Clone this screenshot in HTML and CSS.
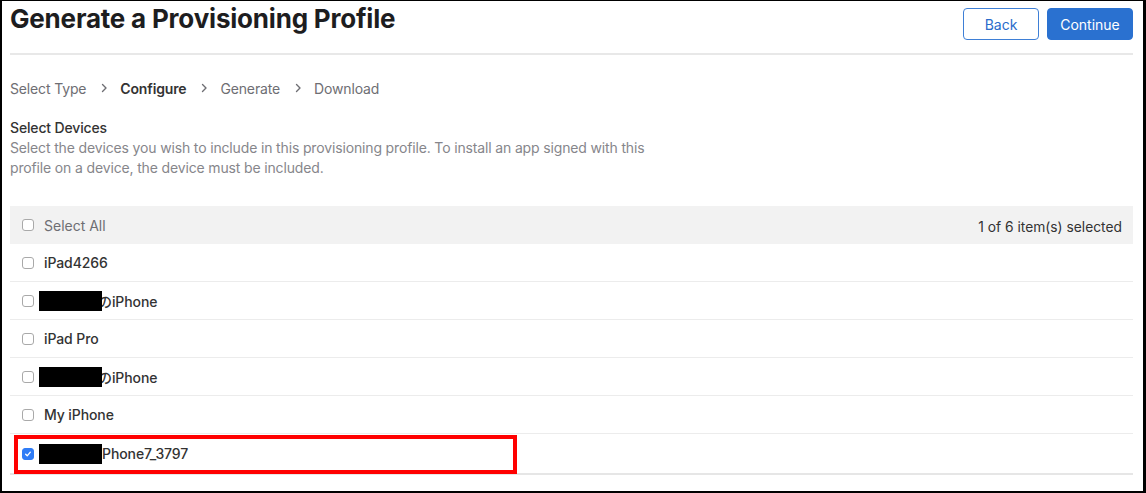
FILE: index.html
```html
<!DOCTYPE html>
<html>
<head>
<meta charset="utf-8">
<link rel="stylesheet" href="styles.css">
</head>
<body>
<div class="frame">
  <header class="header">
    <h1 class="title">Generate a Provisioning Profile</h1>
    <div class="actions">
      <button class="btn btn-back">Back</button>
      <button class="btn btn-continue">Continue</button>
    </div>
  </header>
  <nav class="crumbs">
    <span class="crumb">Select Type</span>
    <span class="chev"><svg width="7" height="10" viewBox="0 0 7 10"><path d="M1.5 1.5 L5 5 L1.5 8.5" fill="none" stroke="#6e6e73" stroke-width="1.4" stroke-linecap="round" stroke-linejoin="round"/></svg></span>
    <span class="crumb crumb-active">Configure</span>
    <span class="chev"><svg width="7" height="10" viewBox="0 0 7 10"><path d="M1.5 1.5 L5 5 L1.5 8.5" fill="none" stroke="#6e6e73" stroke-width="1.4" stroke-linecap="round" stroke-linejoin="round"/></svg></span>
    <span class="crumb">Generate</span>
    <span class="chev"><svg width="7" height="10" viewBox="0 0 7 10"><path d="M1.5 1.5 L5 5 L1.5 8.5" fill="none" stroke="#6e6e73" stroke-width="1.4" stroke-linecap="round" stroke-linejoin="round"/></svg></span>
    <span class="crumb">Download</span>
  </nav>
  <section class="intro">
    <div class="intro-title">Select Devices</div>
    <p class="intro-desc">Select the devices you wish to include in this provisioning profile. To install an app signed with this profile on a device, the device must be included.</p>
  </section>
  <div class="list">
    <div class="list-head">
      <label class="row-label"><span class="cb"></span><span class="all">Select All</span></label>
      <span class="count">1 of 6 item(s) selected</span>
    </div>
    <div class="row"><label class="row-label"><span class="cb"></span><span class="name">iPad4266</span></label></div>
    <div class="row"><label class="row-label"><span class="cb"></span><span class="name"><span class="redact"></span><span class="after-redact">のiPhone</span></span></label></div>
    <div class="row"><label class="row-label"><span class="cb"></span><span class="name">iPad Pro</span></label></div>
    <div class="row"><label class="row-label"><span class="cb"></span><span class="name"><span class="redact"></span><span class="after-redact">のiPhone</span></span></label></div>
    <div class="row"><label class="row-label"><span class="cb"></span><span class="name">My iPhone</span></label></div>
    <div class="row row-last"><label class="row-label"><span class="cb cb-on"><svg width="12" height="12" viewBox="0 0 12 12"><path d="M3.2 6.3 L5.1 8.2 L8.8 3.8" fill="none" stroke="#fff" stroke-width="1.6" stroke-linecap="round" stroke-linejoin="round"/></svg></span><span class="name"><span class="redact"></span><span class="after-redact2">Phone7_3797</span></span></label>
      <div class="highlight"></div>
    </div>
  </div>
</div>
</body>
</html>
```
FILE: styles.css
```css
* { box-sizing: border-box; }
html, body { margin: 0; padding: 0; background: #fff; }
body { font-family: Inter, "Noto Sans CJK JP", "Noto Sans", sans-serif; color: #333; }
.frame {
  width: 1146px; height: 493px;
  border-style: solid; border-color: #000;
  border-width: 1px 3px 2px 2px;
  padding: 0 10px 0 8px;
  overflow: hidden;
}
.header {
  display: flex; justify-content: space-between; align-items: flex-start;
  height: 54px;
  border-bottom: 2px solid #e8e8e8;
}
.title {
  margin: 0; font-size: 26px; line-height: 36px; font-weight: 700; color: #1d1d1f; letter-spacing: -0.2px;
}
.actions { display: flex; gap: 8px; margin-top: 7px; }
.btn {
  height: 32px; font-family: inherit; font-size: 14px; border-radius: 4px; cursor: pointer; padding: 0;
}
.btn-back { width: 76px; background: #fff; border: 1px solid #3e7fd6; color: #2a6ccb; }
.btn-continue { width: 86px; background: #2a71d0; border: 1px solid #2a71d0; color: #fff; }
.crumbs { display: flex; align-items: center; margin-top: 23px; height: 20px; font-size: 14px; color: #6e6e73; letter-spacing: -0.15px; }
.crumb-active { font-weight: 600; color: #333; }
.chev { display: flex; align-items: center; margin: 0 12px 0 15px; }
.intro { margin-top: 20px; letter-spacing: -0.15px; }
.intro-title { font-size: 14px; line-height: 20px; font-weight: 500; color: #333; }
.intro-desc { margin: 0; font-size: 14px; line-height: 20px; color: #86868b; max-width: 650px; }
.list { margin-top: 28px; }
.list-head {
  display: flex; justify-content: space-between; align-items: center;
  height: 38px; background: #f2f2f2; padding: 0 11px 0 12px;
}
.count { font-size: 13.8px; color: #333; padding-top: 3px; }
.row-label { display: flex; align-items: center; }
.cb {
  width: 12px; height: 12px; border: 1px solid #a9a9a9; border-radius: 3px; background: #fff;
  margin-right: 10px; flex: none; display: flex; align-items: center; justify-content: center;
}
.cb-on { background: #2f7cf6; border-color: #2f7cf6; }
.all { font-size: 14px; color: #6e6e73; }
.row {
  position: relative;
  display: flex; align-items: center; height: 38px;
  border-bottom: 1px solid #ececec; padding-left: 12px;
}
.row-last { height: 41px; border-bottom: 2px solid #e6e6e6; }
.name { font-size: 14px; font-weight: 500; color: #333; display: flex; align-items: center; letter-spacing: -0.1px; }
.redact { display: inline-block; width: 63px; height: 20px; background: #000; margin-left: -5px; position: relative; z-index: 1; }
.after-redact { margin-left: -4px; }
.after-redact2 { margin-left: 0; }
.highlight {
  position: absolute; left: 4px; top: 1px; width: 503px; height: 39px;
  border: 4px solid #ff0000; pointer-events: none;
}
```
